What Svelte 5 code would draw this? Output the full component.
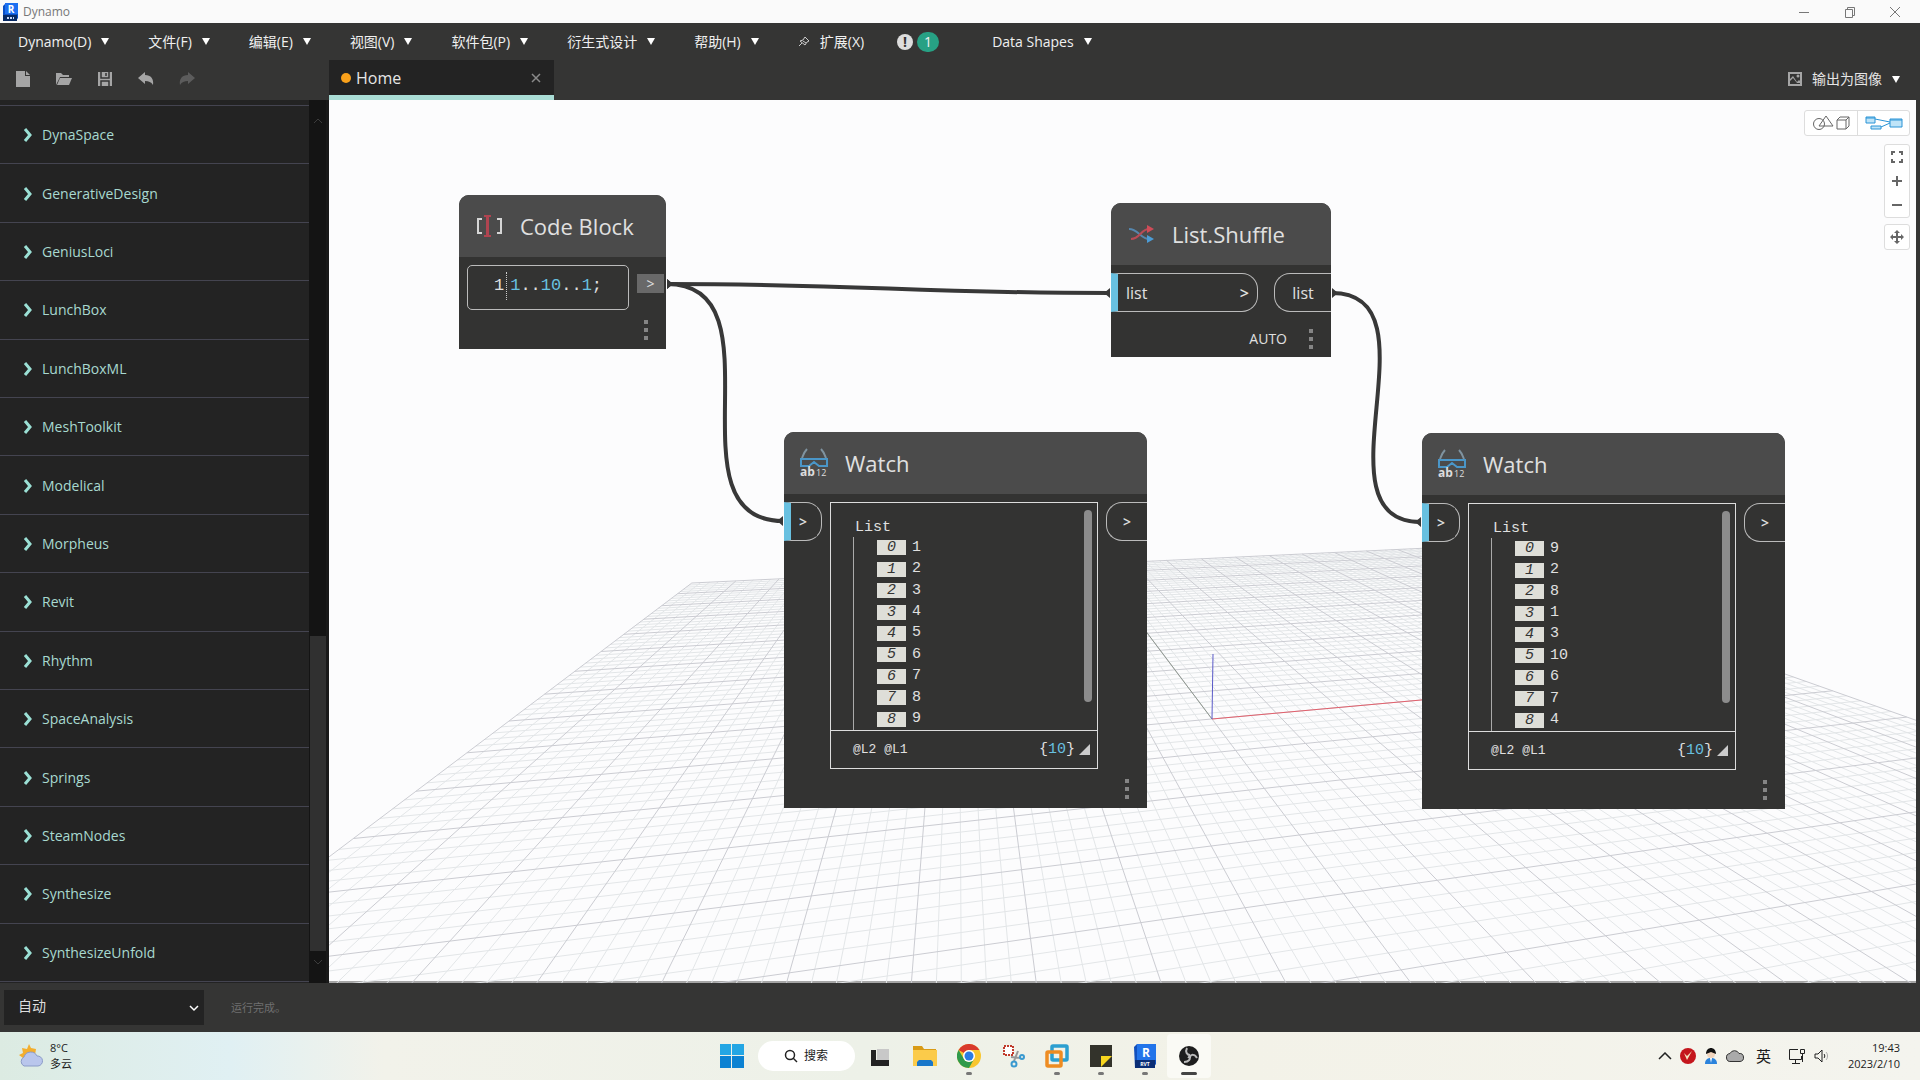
<script lang="ts">
    type Point = [number, number]

    const menus = ["Dynamo(D)", "文件(F)", "编辑(E)", "视图(V)", "软件包(P)", "衍生式设计", "帮助(H)"]

    const packages = [
        "DynaSpace", "GenerativeDesign", "GeniusLoci", "LunchBox", "LunchBoxML",
        "MeshToolkit", "Modelical", "Morpheus", "Revit", "Rhythm",
        "SpaceAnalysis", "Springs", "SteamNodes", "Synthesize", "SynthesizeUnfold"
    ]

    const watches = [
        { x: 455, y: 332, values: [1, 2, 3, 4, 5, 6, 7, 8, 9] },
        { x: 1093, y: 333, values: [9, 2, 8, 1, 3, 10, 6, 7, 4] }
    ]

    const wires: { from: Point, to: Point }[] = [
        { from: [338, 184], to: [781, 193] },
        { from: [338, 184], to: [454, 421] },
        { from: [1003, 193], to: [1092, 422] }
    ]

    let runMode: string = "auto"

    // ground plane: origin and the two vanishing points on the horizon
    const origin: Point = [883, 619]
    const vanishU: Point = [4597, 282]
    const vanishV: Point = [629, 282]
    const a = 0.1765
    const b = 0.8535
    const near = 0.3

    function project(u: number, v: number): string {
        const w = 1 + a * u + b * v
        const x = (origin[0] + a * u * vanishU[0] + b * v * vanishV[0]) / w
        const y = (origin[1] + a * u * vanishU[1] + b * v * vanishV[1]) / w
        return `${x.toFixed(1)} ${y.toFixed(1)}`
    }

    function gridPath(major: boolean): string {
        let d = ""
        for (let i = -50; i <= 50; i++) {
            if ((i % 5 === 0) !== major) continue
            const t = i / 50
            const vMin = Math.max(-1, (near - 1 - a * t) / b)
            d += `M${project(t, vMin)}L${project(t, 1)}`
            const uMin = Math.max(-1, (near - 1 - b * t) / a)
            if (uMin < 1) d += `M${project(uMin, t)}L${project(1, t)}`
        }
        return d
    }

    function wirePath(from: Point, to: Point): string {
        const reach = Math.hypot(to[0] - from[0], to[1] - from[1]) * 0.45
        return `M${from[0]} ${from[1]}C${from[0] + reach} ${from[1]} ${to[0] - reach} ${to[1]} ${to[0]} ${to[1]}`
    }
</script>

{#snippet dots()}
    <button class="dots" aria-label="更多"><i></i><i></i><i></i></button>
{/snippet}

<div class="app">
    <header class="titlebar">
        <svg class="logo" width="16" height="18" viewBox="0 0 16 18">
            <path d="M1 3l3-3h12v15l-2 3H1z" fill="#0b4fc4" />
            <path d="M3 0h13v11H3z" fill="#1d6ff0" />
            <path d="M1 12h14v6H1z" fill="#082a63" />
            <text x="9" y="10" text-anchor="middle" font-size="10" font-weight="700" fill="#fff">R</text>
            <path d="M5 15h7" stroke="#c9d8f5" stroke-width="2" stroke-dasharray="2 1" />
        </svg>
        <span class="name">Dynamo</span>
        <button aria-label="最小化"><svg width="12" height="12" viewBox="0 0 12 12"><path d="M1 6.500h10" /></svg></button>
        <button aria-label="还原"><svg width="12" height="12" viewBox="0 0 12 12"><path d="M1.500 3.500h7v8h-7zM3.500 3V1.500h7v8H9" /></svg></button>
        <button aria-label="关闭"><svg width="12" height="12" viewBox="0 0 12 12"><path d="M1 1l10 10M11 1L1 11" /></svg></button>
    </header>

    <nav class="menubar">
        {#each menus as menu}
            <button class="menu">{menu}<span class="arrow"></span></button>
        {/each}
        <button class="menu extension">
            <svg width="12" height="12" viewBox="0 0 12 12" fill="none" stroke="#ccc"><path d="M7 1l4 4-2 1-2 3-5-4 3-1zM4 7l-3 3M5 5l3 2" /></svg>
            扩展(X)
        </button>
        <button class="alerts" aria-label="通知">
            <span class="mark">!</span><span class="count">1</span>
        </button>
        <button class="menu">Data Shapes<span class="arrow"></span></button>
    </nav>

    <div class="workspace">
        <aside>
            <div class="toolbar">
                <button aria-label="新建"><svg width="16" height="18" viewBox="0 0 16 18"><path d="M1 1h9v5h5v11H1zM11 1l4 4h-4z" fill="#a5a5a5" /></svg></button>
                <button aria-label="打开"><svg width="18" height="16" viewBox="0 0 18 16"><path d="M1 14V2h5l2 2h6v2H5z" fill="#a5a5a5" /><path d="M5 7h12l-3 7H2z" fill="#a5a5a5" /></svg></button>
                <button aria-label="保存"><svg width="16" height="16" viewBox="0 0 16 16"><path d="M1 1h14v14H1z" fill="#a5a5a5" /><path d="M4 1v6h8V1M4 15v-5h8v5M9 2v3" fill="none" stroke="#353535" stroke-width="1.500" /></svg></button>
                <button aria-label="撤销"><svg width="18" height="16" viewBox="0 0 18 16"><path d="M1 7l7-6v3c6 0 9 4 8 10-2-3-4-4-8-4v3z" fill="#a5a5a5" /></svg></button>
                <button aria-label="重做"><svg width="18" height="16" viewBox="0 0 18 16"><path d="M17 7l-7-6v3C4 4 1 8 2 14c2-3 4-4 8-4v3z" fill="#5c5c5c" /></svg></button>
            </div>
            <div class="library">
                <ul>
                    {#each packages as name}
                        <li>
                            <button>
                                <svg width="10" height="14" viewBox="0 0 10 14"><path d="M2 1l5 6-5 6" fill="none" stroke="#9be0d5" stroke-width="3" /></svg>
                                {name}
                            </button>
                        </li>
                    {/each}
                </ul>
                <div class="scrollbar">
                    <svg width="10" height="6" viewBox="0 0 10 6"><path d="M1 5l4-4 4 4" /></svg>
                    <div class="thumb"></div>
                    <svg width="10" height="6" viewBox="0 0 10 6"><path d="M1 1l4 4 4-4" /></svg>
                </div>
            </div>
        </aside>

        <main>
            <div class="tabs">
                <div class="tab">
                    <span class="unsaved"></span>
                    <span class="tab-name">Home</span>
                    <button aria-label="关闭标签"><svg width="10" height="10" viewBox="0 0 10 10"><path d="M1 1l8 8M9 1L1 9" stroke="#8a8a8a" stroke-width="1.500" /></svg></button>
                </div>
                <button class="export">
                    <svg width="14" height="14" viewBox="0 0 14 14"><path d="M1 1h12v12H1z" fill="none" stroke="#a5a5a5" stroke-width="2" /><path d="M2 7l3-3 4 6 2-2 2 2v1H9L5 6 2 9z" fill="#a5a5a5" /><circle cx="10" cy="4" r="1.500" fill="#a5a5a5" /></svg>
                    输出为图像
                    <span class="arrow"></span>
                </button>
            </div>

            <div class="canvas">
                <svg class="grid" viewBox="0 0 1587 883" preserveAspectRatio="xMinYMin slice">
                    <path d={gridPath(false)} stroke="#e3e6e8" />
                    <path d={gridPath(true)} stroke="#cbccd2" />
                    <path d="M{project(0, 0)}L{project(0, 1)}" stroke="#8f978f" />
                    <path d="M{project(0, 0)}L{project(1, 0)}" stroke="#e2606c" />
                    <path d="M883 619L884 554" stroke="#5a5ac8" />
                </svg>

                <svg class="wires">
                    {#each wires as { from, to }}
                        <path d={wirePath(from, to)} fill="none" stroke="#383838" stroke-width="4" />
                        <path d="M{from[0]} {from[1] - 5}l6 5-6 5zM{to[0]} {to[1] - 5}l-6 5 6 5z" fill="#383838" />
                    {/each}
                </svg>

                <section class="node code-node" style="left: 130px; top: 95px">
                    <h2>
                        <svg width="30" height="30" viewBox="0 0 30 30" fill="none">
                            <path d="M8 8H4v14h4M23 8h4v14h-4" stroke="#d5d5d5" stroke-width="2" />
                            <path d="M10 5h3v20h-3M17 5h-3v20h3" stroke="#b04450" stroke-width="2" />
                        </svg>
                        Code Block
                    </h2>
                    <div class="ports">
                        <code class="editor"><span class="line-number">1</span><span class="source"><b>1</b>..<b>10</b>..<b>1</b>;</span></code>
                        <button class="code-port" aria-label="输出">&gt;</button>
                    </div>
                    <footer>{@render dots()}</footer>
                </section>

                <section class="node shuffle-node" style="left: 782px; top: 103px">
                    <h2>
                        <svg width="30" height="30" viewBox="0 0 30 30" fill="none" stroke-width="2">
                            <path d="M3 10c9 0 12 10 20 10" stroke="#5586ad" />
                            <path d="M5 20c9 0 10-10 18-10" stroke="#b84b56" />
                            <path d="M21 6l7 4-7 4z" fill="#d04c58" />
                            <path d="M21 16l7 4-7 4z" fill="#4c9cd6" />
                        </svg>
                        List.Shuffle
                    </h2>
                    <div class="ports">
                        <button class="port in">list<span>&gt;</span></button>
                        <button class="port out">list</button>
                    </div>
                    <footer>AUTO{@render dots()}</footer>
                </section>

                {#each watches as watch}
                    <section class="node watch-node" style="left: {watch.x}px; top: {watch.y}px">
                        <h2>
                            <svg width="30" height="34" viewBox="0 0 30 34" fill="none" stroke-width="2">
                                <path d="M8 3C5 6 4 9 3 12M22 3c3 3 4 6 5 9" stroke="#7f93a0" />
                                <path d="M2 13h26v7h-8l-5-4-5 4H2z" stroke="#4a96c8" />
                                <text x="1" y="30" font-size="12" font-weight="700" fill="#ddd">ab</text>
                                <text x="17" y="30" font-size="9" fill="#ddd">12</text>
                            </svg>
                            Watch
                        </h2>
                        <div class="ports">
                            <button class="port in" aria-label="输入"><span>&gt;</span></button>
                            <div class="output">
                                <div class="tree">
                                    <div class="list">
                                        <p>List</p>
                                        <ol>
                                            {#each watch.values as value, i}
                                                <li><em>{i}</em>{value}</li>
                                            {/each}
                                        </ol>
                                    </div>
                                    <div class="tree-thumb"></div>
                                </div>
                                <div class="summary">
                                    <span class="levels">@L2 @L1</span>
                                    <span>{"{"}<b>10</b>{"}"}</span>
                                    <svg width="11" height="11" viewBox="0 0 11 11"><path d="M11 0v11H0z" fill="#ccc" /></svg>
                                </div>
                            </div>
                            <button class="port out" aria-label="输出"><span>&gt;</span></button>
                        </div>
                        <footer>{@render dots()}</footer>
                    </section>
                {/each}

                <div class="view-tools">
                    <div class="tool-group row">
                        <button aria-label="三维预览"><svg width="38" height="16" viewBox="0 0 38 16" fill="none" stroke="#666"><circle cx="7" cy="9" r="5.500" /><path d="M14 1l7 10H7zM25 5h9v9h-9zM25 5l3-3h9v9l-3 3M34 5l3-3" /></svg></button>
                        <button aria-label="节点图"><svg width="38" height="16" viewBox="0 0 38 16" fill="#bfe4f8" stroke="#2a94d6"><path d="M10 4l15 3M16 12l9-4" /><path d="M1 2h9v6H1zM1 3h9M25 4h12v8H25zM25 5h12M6 11h10v3H6z" /></svg></button>
                    </div>
                    <div class="tool-group">
                        <button aria-label="缩放至适合"><svg width="12" height="12" viewBox="0 0 12 12" fill="none" stroke="#666" stroke-width="2"><path d="M1 4V1h3M8 1h3v3M11 8v3H8M4 11H1V8" /></svg></button>
                        <button aria-label="放大"><svg width="12" height="12" viewBox="0 0 12 12" stroke="#666" stroke-width="2"><path d="M1 6h10M6 1v10" /></svg></button>
                        <button aria-label="缩小"><svg width="12" height="12" viewBox="0 0 12 12" stroke="#666" stroke-width="2"><path d="M1 6h10" /></svg></button>
                    </div>
                    <div class="tool-group">
                        <button aria-label="平移"><svg width="14" height="14" viewBox="0 0 14 14" fill="#666"><path d="M6 3h2v8H6zM3 6h8v2H3zM7 0l3 3H4zM7 14l3-3H4zM0 7l3-3v6zM14 7l-3-3v6z" /></svg></button>
                    </div>
                </div>
            </div>
        </main>
    </div>

    <div class="statusbar">
        <div class="run-mode">
            <select bind:value={runMode} aria-label="运行模式">
                <option value="auto">自动</option>
                <option value="manual">手动</option>
            </select>
            <svg width="10" height="8" viewBox="0 0 10 8"><path d="M1 2l4 4 4-4" fill="none" stroke="#fff" stroke-width="1.500" /></svg>
        </div>
        <span>运行完成。</span>
    </div>

    <div class="taskbar">
        <button class="weather">
            <svg width="26" height="24" viewBox="0 0 26 24">
                <path d="M11 0l2 4 5 1-1 6-12 3-4-3 4-2-1-5 5 1z" fill="#f3ae2e" />
                <path d="M6 22a5 5 0 010-9 7 7 0 0113-1 5 5 0 011 10z" fill="#b9c6ec" stroke="#8b9cc8" />
            </svg>
            <span>8°C<br />多云</span>
        </button>

        <div class="apps">
            <button aria-label="开始"><svg width="24" height="24" viewBox="0 0 24 24"><path d="M0 0h11v11H0zM12 0h12v11H12z" fill="#24a6e4" /><path d="M0 12h11v12H0zM12 12h12v12H12z" fill="#0c82d2" /></svg></button>
            <button class="search">
                <svg width="14" height="14" viewBox="0 0 14 14" fill="none" stroke="#222" stroke-width="1.500"><circle cx="6" cy="6" r="4.500" /><path d="M9 9l4 4" /></svg>
                搜索
            </button>
            <button aria-label="任务视图"><svg width="22" height="22" viewBox="0 0 22 22"><path d="M7 4h12v12H7z" fill="#c8c8c8" /><path d="M1 5h5v10h13v6H1z" fill="#222" /></svg></button>
            <button aria-label="文件资源管理器"><svg width="26" height="24" viewBox="0 0 26 24"><path d="M1 2h9l2 3h12v5H1z" fill="#d99b16" /><path d="M1 6h24v16H1z" fill="#fbcb4a" /><path d="M5 22v-4l2-2h12l2 2v4z" fill="#1977c9" /></svg></button>
            <button class="running" aria-label="Chrome"><svg width="24" height="24" viewBox="0 0 24 24"><circle cx="12" cy="12" r="12" fill="#f8c62f" /><path d="M1.600 6A12 12 0 0122.400 6H12a6 6 0 00-5 3z" fill="#d93a2d" /><path d="M1.600 6A12 12 0 0012 24l5-9a6 6 0 01-10 0z" fill="#2f9a4b" /><circle cx="12" cy="12" r="6" fill="#fff" /><circle cx="12" cy="12" r="4.500" fill="#2b7ce4" /></svg></button>
            <button aria-label="截图工具"><svg width="24" height="24" viewBox="0 0 24 24" fill="none"><path d="M11 2H3v9h9V2z" fill="#fff" stroke="#c03a2b" stroke-width="2" stroke-dasharray="2 1" /><path d="M17 7l-4 10M10 13l10 1" stroke="#999" stroke-width="2" /><circle cx="13" cy="20" r="2.500" stroke="#3a9ad0" stroke-width="2" /><circle cx="21" cy="13" r="2" stroke="#3a9ad0" stroke-width="2" /></svg></button>
            <button class="running" aria-label="虚拟机"><svg width="26" height="26" viewBox="0 0 26 26" fill="none" stroke-width="3.500"><rect x="8" y="3" width="15" height="14" rx="1" stroke="#2c9fd0" /><rect x="3" y="9" width="14" height="14" rx="1" stroke="#ee8c22" /></svg></button>
            <button class="running" aria-label="便笺"><svg width="22" height="22" viewBox="0 0 22 22"><path d="M0 0h22v22H0z" fill="#33332b" /><path d="M11 22V11h11z" fill="#f7d51e" /></svg></button>
            <button class="running" aria-label="Revit"><svg width="22" height="24" viewBox="0 0 22 24"><path d="M0 3l3-3h19v20l-3 4H1z" fill="#1150bd" /><path d="M3 0h19v16H3z" fill="#2274ea" /><path d="M1 16h20v8H1z" fill="#0a2e75" /><text x="12" y="13" text-anchor="middle" font-size="12" font-weight="700" fill="#fff">R</text><text x="11" y="22" text-anchor="middle" font-size="5" font-weight="700" fill="#fff">RVT</text></svg></button>
            <button class="running active" aria-label="OBS">
                <svg width="22" height="22" viewBox="0 0 22 22">
                    <circle cx="11" cy="11" r="10" fill="#1e1e1e" />
                    <path d="M9 3c-2 4 0 7 3 7M19 13c-2-4-6-4-7-1M6 17c5 0 7-3 5-6M12 10l-1 2 2 0" fill="none" stroke="#bbb" stroke-width="2" />
                </svg>
            </button>
        </div>

        <div class="tray">
            <button aria-label="显示隐藏的图标"><svg width="14" height="8" viewBox="0 0 14 8"><path d="M1 7l6-6 6 6" fill="none" stroke="#222" stroke-width="1.500" /></svg></button>
            <button aria-label="安全"><svg width="16" height="16" viewBox="0 0 16 16"><circle cx="8" cy="8" r="8" fill="#c4161c" /><path d="M4 5l3 7 5-9-5 5z" fill="#f4e3c0" /></svg></button>
            <button aria-label="用户"><svg width="14" height="16" viewBox="0 0 14 16"><path d="M1 16c0-5 3-6 6-6s6 1 6 6z" fill="#2b83dc" /><circle cx="7" cy="6" r="4" fill="#f0d4bd" /><path d="M2 6c0-8 10-8 10 0L7 4z" fill="#111" /><path d="M6 10h2l-1 5z" fill="#fff" /></svg></button>
            <button aria-label="云盘"><svg width="18" height="14" viewBox="0 0 18 14"><path d="M5 12.500a4 4 0 01-1-8 5 5 0 019 0 4 4 0 011 8z" fill="#aaa" stroke="#333" /></svg></button>
            <button class="ime">英</button>
            <button aria-label="网络"><svg width="18" height="18" viewBox="0 0 18 18" fill="none" stroke="#222"><path d="M10 2.500H1.500v10h12V9M4 16.500h8M7.500 13v3M12.500 2.500h4v4h-4zM14.500 7v8" /></svg></button>
            <button aria-label="音量"><svg width="16" height="14" viewBox="0 0 16 14" fill="none" stroke="#222"><path d="M1 5h3l4-4v12L4 9H1zM10 5c1 1 1 3 0 4" /><path d="M12 3c2 2 2 6 0 8" stroke="#aaa" /></svg></button>
            <button class="clock">19:43<br />2023/2/10</button>
        </div>
    </div>
</div>

<style>
    :global(body) {
        margin: 0;
    }

    .app {
        --bar: #353534;
        --panel: #232323;
        --mint: #a8d9d0;
        --blue: #68c0e0;
        display: flex;
        flex-direction: column;
        min-height: 100vh;
        font-family: "Open Sans", "Noto Sans CJK SC", sans-serif;
        font-size: 14px;
        line-height: 20px;
        color: #e6e6e6;
        background: var(--bar);
    }

    button {
        display: flex;
        align-items: center;
        justify-content: center;
        margin: 0;
        padding: 0;
        border: 0;
        background: none;
        color: inherit;
        font: inherit;
        cursor: pointer;
    }

    svg {
        flex: none;
    }

    .titlebar {
        display: flex;
        align-items: center;
        height: 23px;
        padding: 0 13px 0 2px;
        background: #fafafa;
        color: #777;
        font-size: 12px;
    }

    .name {
        flex: 1;
        margin-left: 5px;
    }

    .titlebar button {
        width: 46px;
        height: 20px;
    }

    .titlebar button:last-child {
        width: 24px;
        margin-left: 10px;
    }

    .titlebar button svg {
        fill: none;
        stroke: #777;
    }

    .menubar {
        display: flex;
        align-items: center;
        gap: 39px;
        height: 37px;
        padding: 0 18px;
        color: #f0f0f0;
    }

    .menu {
        gap: 10px;
        white-space: nowrap;
    }

    .arrow {
        border: 4px solid transparent;
        border-top: 7px solid #fff;
        border-bottom: 0;
    }

    .alerts {
        gap: 4px;
        margin: 0 14px 0 -6px;
    }

    .mark {
        width: 16px;
        height: 16px;
        border-radius: 8px;
        background: #ddd;
        color: #333;
        font-weight: 700;
        line-height: 16px;
    }

    .count {
        width: 22px;
        height: 20px;
        border-radius: 10px;
        background: #27a184;
    }

    .workspace {
        flex: 1;
        display: flex;
        padding-right: 4px;
    }

    aside {
        display: flex;
        flex-direction: column;
        width: 329px;
        flex: none;
    }

    .toolbar {
        box-sizing: border-box;
        display: flex;
        align-items: center;
        gap: 24px;
        height: 40px;
        padding: 0 0 2px 14px;
    }

    .toolbar button {
        width: 17px;
    }

    .library {
        flex: 1;
        display: flex;
        background: #191919;
    }

    ul {
        flex: 1;
        display: flex;
        flex-direction: column;
        margin: 0;
        padding: 5px 0 1px;
        list-style: none;
        background: var(--panel);
    }

    ul li {
        flex: 1;
        display: flex;
        min-height: 40px;
        border-top: 1px solid #444450;
    }

    ul li:last-child {
        border-bottom: 1px solid #444450;
    }

    ul button {
        flex: 1;
        justify-content: flex-start;
        gap: 9px;
        padding: 1px 0 0 23px;
        color: var(--mint);
    }

    .scrollbar {
        display: flex;
        flex-direction: column;
        align-items: center;
        width: 17px;
        margin-right: 3px;
        padding: 18px 0;
        background: #141414;
    }

    .scrollbar svg {
        fill: none;
        stroke: #3c3c3c;
    }

    .thumb {
        width: 16px;
        height: 315px;
        margin: auto 0 8px;
        background: #303030;
    }

    main {
        flex: 1;
        display: flex;
        flex-direction: column;
        min-width: 0;
    }

    .tabs {
        display: flex;
        justify-content: space-between;
        height: 40px;
    }

    .tab {
        box-sizing: border-box;
        display: flex;
        align-items: center;
        width: 225px;
        padding: 0 13px 0 12px;
        border-bottom: 5px solid #a9dcd5;
        background: var(--panel);
        font-size: 16px;
    }

    .unsaved {
        width: 10px;
        height: 10px;
        border-radius: 5px;
        background: #f9a11b;
    }

    .tab-name {
        flex: 1;
        margin-left: 5px;
    }

    .export {
        gap: 10px;
        padding: 0 16px 2px 0;
    }

    .canvas {
        position: relative;
        flex: 1;
        overflow: hidden;
        box-shadow: inset 0 -2px #a5a5a5;
        background: #fcfcfd;
    }

    .grid,
    .wires {
        position: absolute;
        inset: 0;
        width: 100%;
        height: 100%;
    }

    .node {
        position: absolute;
        display: flex;
        flex-direction: column;
        border-radius: 10px 10px 0 0;
        overflow: hidden;
        background: #333332;
        color: #e0e0e0;
    }

    h2 {
        display: flex;
        align-items: center;
        gap: 16px;
        height: 62px;
        margin: 0;
        padding-left: 15px;
        background: #4b4b4b;
        font-size: 22px;
        font-weight: 400;
    }

    .code-node {
        width: 207px;
    }

    .shuffle-node {
        width: 220px;
    }

    .watch-node {
        width: 363px;
    }

    .ports {
        display: flex;
        justify-content: space-between;
        align-items: flex-start;
        padding-top: 8px;
    }

    .editor {
        box-sizing: border-box;
        display: flex;
        align-items: center;
        width: 162px;
        height: 45px;
        margin-left: 8px;
        padding: 0 0 4px 26px;
        border: 1px solid #bbb;
        border-radius: 5px;
        font: 17px/28px "Liberation Mono", monospace;
    }

    .line-number {
        padding-right: 2px;
        border-right: 1px dotted #ccc;
    }

    .source {
        padding-left: 3px;
    }

    b {
        color: var(--blue);
        font-weight: 400;
    }

    .code-port {
        width: 27px;
        height: 19px;
        margin: 9px 2px 0 0;
        background: #696969;
    }

    .port {
        box-sizing: border-box;
        height: 39px;
        border: 1px solid #bbb;
        font-size: 16px;
    }

    .port span {
        font-weight: 600;
    }

    .in {
        justify-content: space-between;
        padding: 0 8px;
        border-left: 7px solid var(--blue);
        border-radius: 0 16px 16px 0;
    }

    .out {
        border-right: 0;
        border-radius: 16px 0 0 16px;
    }

    .shuffle-node .in {
        width: 147px;
    }

    .shuffle-node .out {
        width: 57px;
    }

    .watch-node .port {
        width: 41px;
        font-size: 14px;
    }

    .watch-node .in {
        width: 38px;
    }

    footer {
        box-sizing: border-box;
        display: flex;
        justify-content: flex-end;
        align-items: center;
        gap: 18px;
        height: 39px;
        padding-right: 14px;
    }

    .shuffle-node footer {
        height: 45px;
        padding-top: 8px;
    }

    .dots {
        flex-direction: column;
        gap: 4px;
        width: 12px;
    }

    .dots i {
        width: 4px;
        height: 4px;
        background: #858585;
    }

    .output {
        box-sizing: border-box;
        width: 268px;
        height: 267px;
        border: 1px solid #ddd;
        font: 15px/18px "Liberation Mono", monospace;
    }

    .tree {
        box-sizing: border-box;
        display: flex;
        justify-content: space-between;
        height: 228px;
        padding: 0 5px 0 22px;
        border-bottom: 1px solid #ddd;
    }

    .list {
        display: flex;
        flex-direction: column;
        padding-top: 16px;
    }

    p {
        margin: 0 0 0 2px;
    }

    ol {
        flex: 1;
        display: flex;
        flex-direction: column;
        margin: 0;
        padding-left: 23px;
        border-left: 1px solid #aaa;
        list-style: none;
    }

    ol li {
        flex: 1;
        display: flex;
        align-items: center;
        gap: 6px;
    }

    em {
        width: 29px;
        height: 15px;
        background: #deded8;
        color: #333;
        line-height: 15px;
        text-align: center;
    }

    .tree-thumb {
        width: 8px;
        height: 192px;
        margin-top: 7px;
        border-radius: 4px;
        background: #8c8c8c;
    }

    .summary {
        display: flex;
        align-items: center;
        gap: 4px;
        height: 37px;
        padding: 0 7px 0 22px;
    }

    .levels {
        flex: 1;
        font-size: 13px;
    }

    .view-tools {
        position: absolute;
        top: 10px;
        right: 6px;
        display: flex;
        flex-direction: column;
        align-items: flex-end;
        gap: 6px;
    }

    .tool-group {
        border: 1px solid #ddd;
        border-radius: 3px;
        background: #fff;
    }

    .tool-group button {
        width: 24px;
        height: 24px;
    }

    .row {
        display: flex;
        margin-bottom: 2px;
    }

    .row button {
        width: 52px;
    }

    .row button + button {
        border-left: 1px solid #ddd;
    }

    .statusbar {
        display: flex;
        align-items: center;
        gap: 27px;
        height: 49px;
        padding-left: 4px;
        color: #707070;
    }

    .statusbar > span {
        font-size: 11px;
    }

    .run-mode {
        display: grid;
        align-items: center;
        width: 200px;
        height: 35px;
        background: var(--panel);
    }

    .run-mode > * {
        grid-area: 1 / 1;
    }

    .run-mode svg {
        justify-self: end;
        margin-right: 5px;
        pointer-events: none;
    }

    select {
        appearance: none;
        height: 35px;
        padding: 0 14px 4px;
        border: 0;
        background: none;
        color: #ddd;
        font: inherit;
    }

    .taskbar {
        display: grid;
        grid-template-columns: 1fr auto 1fr;
        height: 48px;
        background: linear-gradient(90deg, #dcebe2, #e0f0f3 12%, #f2f2ea 20%, #edf1e8 45%, #f3f2e8 65%, #f4f4ee);
        color: #1c1c1c;
        font-size: 11px;
        line-height: 16px;
    }

    .weather {
        justify-self: start;
        gap: 6px;
        padding-left: 18px;
        text-align: left;
    }

    .apps {
        display: flex;
        align-items: center;
    }

    .apps button {
        position: relative;
        width: 44px;
        height: 44px;
    }

    .apps .search {
        gap: 6px;
        width: 97px;
        height: 30px;
        margin: 0 4px;
        border-radius: 15px;
        background: #fff;
        font-size: 12px;
    }

    .running::after {
        content: "";
        position: absolute;
        bottom: 3px;
        width: 6px;
        height: 3px;
        border-radius: 2px;
        background: #777;
    }

    .active {
        border-radius: 4px;
        background: #fafaf5;
    }

    .active::after {
        width: 16px;
        background: #444;
    }

    .tray {
        justify-self: end;
        display: flex;
        align-items: center;
        gap: 8px;
        padding-right: 20px;
    }

    .ime {
        margin: 0 9px 0 4px;
        font-size: 15px;
    }

    .clock {
        margin-left: 10px;
        text-align: right;
    }
</style>
